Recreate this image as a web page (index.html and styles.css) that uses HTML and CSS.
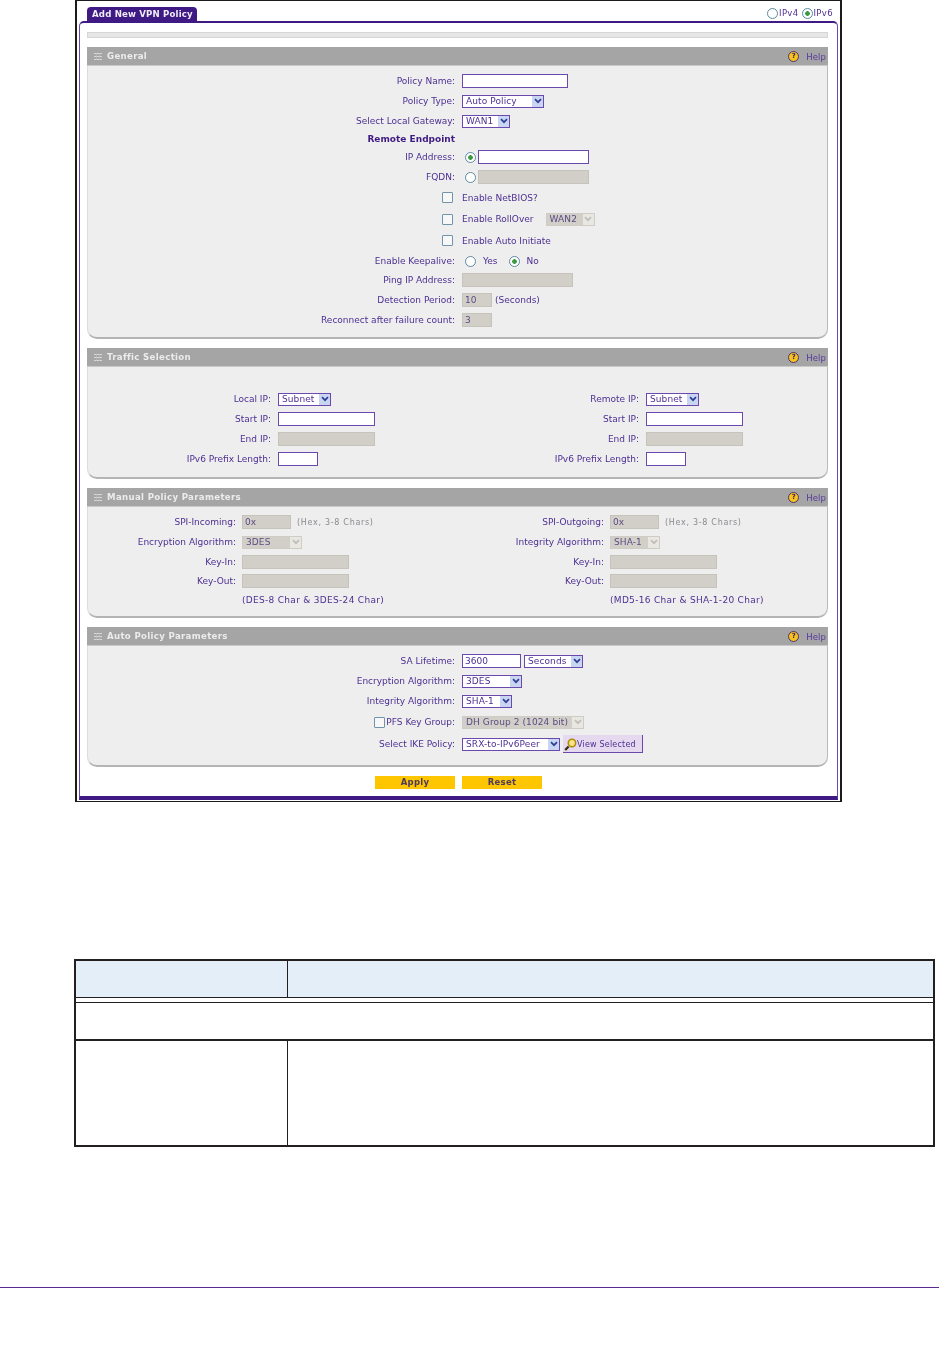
FILE: index.html
```html
<!DOCTYPE html>
<html lang="en">
<head>
<meta charset="utf-8">
<title>Add New VPN Policy</title>
<link rel="stylesheet" href="styles.css">
</head>
<body>
<svg class="defs" width="0" height="0" aria-hidden="true">
  <symbol id="grip" viewBox="0 0 8 7"><path d="M0 .5h8M0 3.5h8M0 6.5h8" stroke="#d8d8d8" fill="none"/><path d="M2.5 0v7M5.5 0v7" stroke="#bdbdbd" stroke-width=".6" fill="none"/></symbol>
  <symbol id="chev" viewBox="0 0 8 6"><path d="M1 1.2l3 3 3-3" stroke="currentColor" stroke-width="1.7" fill="none"/></symbol>
  <symbol id="lens" viewBox="0 0 13 13"><path d="M4.6 8.4L1.2 12" stroke="#3a2a10" stroke-width="2.2" fill="none"/><circle cx="8" cy="5" r="3.7" fill="#f6e58a" stroke="#b08a00" stroke-width="1.6"/></symbol>
</svg>

<div class="panel">
  <div class="tabbar">
    <div class="tab">Add New VPN Policy</div>
    <div class="ipver">
      <input class="radio" type="radio" name="ver"><span>IPv4</span>
      <input class="radio" type="radio" name="ver" checked><span>IPv6</span>
    </div>
  </div>
  <div class="frame">
    <div class="meter"></div>

    <section class="section">
      <div class="head"><svg class="grip"><use href="#grip"/></svg><span class="title">General</span><span class="help"><i class="q">?</i>Help</span></div>
      <div class="body b-general">
        <div class="row r20"><label class="lab">Policy Name:</label><input class="inp w106" type="text"></div>
        <div class="row r20"><label class="lab">Policy Type:</label><span class="sel w82"><span class="val">Auto Policy</span><span class="arr"><svg><use href="#chev"/></svg></span></span></div>
        <div class="row r20"><label class="lab">Select Local Gateway:</label><span class="sel w48"><span class="val">WAN1</span><span class="arr"><svg><use href="#chev"/></svg></span></span></div>
        <div class="row r16"><label class="lab strong">Remote Endpoint</label></div>
        <div class="row r20"><label class="lab">IP Address:</label><input class="radio rd-in" type="radio" name="re" checked><input class="inp w111" type="text"></div>
        <div class="row r20"><label class="lab">FQDN:</label><input class="radio rd-in" type="radio" name="re"><input class="inp w111 off" type="text" disabled></div>
        <div class="row r21"><span class="lab lab-chk"><input class="check" type="checkbox"></span><span class="txt">Enable NetBIOS?</span></div>
        <div class="row r22"><span class="lab lab-chk"><input class="check" type="checkbox"></span><span class="txt">Enable RollOver</span><span class="sel w49 dis roll"><span class="val">WAN2</span><span class="arr"><svg><use href="#chev"/></svg></span></span></div>
        <div class="row r21"><span class="lab lab-chk"><input class="check" type="checkbox"></span><span class="txt">Enable Auto Initiate</span></div>
        <div class="row r20"><label class="lab">Enable Keepalive:</label><input class="radio rd-in" type="radio" name="ka"><span class="txt yes">Yes</span><input class="radio rd-no" type="radio" name="ka" checked><span class="txt no">No</span></div>
        <div class="row r18"><label class="lab">Ping IP Address:</label><input class="inp w111 off" type="text" disabled></div>
        <div class="row r21"><label class="lab">Detection Period:</label><input class="inp w30 off" type="text" value="10" disabled><span class="txt sec">(Seconds)</span></div>
        <div class="row r20"><label class="lab">Reconnect after failure count:</label><input class="inp w30 off" type="text" value="3" disabled></div>
      </div>
    </section>

    <section class="section">
      <div class="head"><svg class="grip"><use href="#grip"/></svg><span class="title">Traffic Selection</span><span class="help"><i class="q">?</i>Help</span></div>
      <div class="body b-traffic pair">
        <div class="col c184">
          <div class="row r20"><label class="lab">Local IP:</label><span class="sel w53"><span class="val">Subnet</span><span class="arr"><svg><use href="#chev"/></svg></span></span></div>
          <div class="row r20"><label class="lab">Start IP:</label><input class="inp w97" type="text"></div>
          <div class="row r20"><label class="lab">End IP:</label><input class="inp w97 off" type="text" disabled></div>
          <div class="row r20"><label class="lab">IPv6 Prefix Length:</label><input class="inp w40" type="text"></div>
        </div>
        <div class="col c184">
          <div class="row r20"><label class="lab">Remote IP:</label><span class="sel w53"><span class="val">Subnet</span><span class="arr"><svg><use href="#chev"/></svg></span></span></div>
          <div class="row r20"><label class="lab">Start IP:</label><input class="inp w97" type="text"></div>
          <div class="row r20"><label class="lab">End IP:</label><input class="inp w97 off" type="text" disabled></div>
          <div class="row r20"><label class="lab">IPv6 Prefix Length:</label><input class="inp w40" type="text"></div>
        </div>
      </div>
    </section>

    <section class="section">
      <div class="head"><svg class="grip"><use href="#grip"/></svg><span class="title">Manual Policy Parameters</span><span class="help"><i class="q">?</i>Help</span></div>
      <div class="body b-manual pair">
        <div class="col c149">
          <div class="row r20"><label class="lab">SPI-Incoming:</label><input class="inp w49 off" type="text" value="0x" disabled><span class="hint">(Hex, 3-8 Chars)</span></div>
          <div class="row r20"><label class="lab">Encryption Algorithm:</label><span class="sel w60 dis"><span class="val">3DES</span><span class="arr"><svg><use href="#chev"/></svg></span></span></div>
          <div class="row r19"><label class="lab">Key-In:</label><input class="inp w107 off" type="text" disabled></div>
          <div class="row r20"><label class="lab">Key-Out:</label><input class="inp w107 off" type="text" disabled></div>
          <div class="row r18"><span class="lab"></span><span class="note">(DES-8 Char &amp; 3DES-24 Char)</span></div>
        </div>
        <div class="col c149">
          <div class="row r20"><label class="lab">SPI-Outgoing:</label><input class="inp w49 off" type="text" value="0x" disabled><span class="hint">(Hex, 3-8 Chars)</span></div>
          <div class="row r20"><label class="lab">Integrity Algorithm:</label><span class="sel w50 dis"><span class="val">SHA-1</span><span class="arr"><svg><use href="#chev"/></svg></span></span></div>
          <div class="row r19"><label class="lab">Key-In:</label><input class="inp w107 off" type="text" disabled></div>
          <div class="row r20"><label class="lab">Key-Out:</label><input class="inp w107 off" type="text" disabled></div>
          <div class="row r18"><span class="lab"></span><span class="note">(MD5-16 Char &amp; SHA-1-20 Char)</span></div>
        </div>
      </div>
    </section>

    <section class="section">
      <div class="head"><svg class="grip"><use href="#grip"/></svg><span class="title">Auto Policy Parameters</span><span class="help"><i class="q">?</i>Help</span></div>
      <div class="body b-auto">
        <div class="row r20"><label class="lab">SA Lifetime:</label><input class="inp w59" type="text" value="3600"><span class="sel w59 after"><span class="val">Seconds</span><span class="arr"><svg><use href="#chev"/></svg></span></span></div>
        <div class="row r20"><label class="lab">Encryption Algorithm:</label><span class="sel w60"><span class="val">3DES</span><span class="arr"><svg><use href="#chev"/></svg></span></span></div>
        <div class="row r20"><label class="lab">Integrity Algorithm:</label><span class="sel w50"><span class="val">SHA-1</span><span class="arr"><svg><use href="#chev"/></svg></span></span></div>
        <div class="row r22"><span class="lab lab-pfs"><input class="check" type="checkbox"><span>PFS Key Group:</span></span><span class="sel w122 dis"><span class="val">DH Group 2 (1024 bit)</span><span class="arr"><svg><use href="#chev"/></svg></span></span></div>
        <div class="row r22"><label class="lab">Select IKE Policy:</label><span class="sel w98"><span class="val">SRX-to-IPv6Peer</span><span class="arr"><svg><use href="#chev"/></svg></span></span><button class="view" type="button"><svg><use href="#lens"/></svg>View Selected</button></div>
      </div>
    </section>

    <div class="actions">
      <button class="act" type="button">Apply</button>
      <button class="act" type="button">Reset</button>
    </div>
  </div>
</div>

<table class="doc">
  <thead>
    <tr class="doc-head"><th class="doc-a"></th><th></th></tr>
  </thead>
  <tbody>
    <tr class="doc-gap"><td colspan="2"></td></tr>
    <tr class="doc-group"><td colspan="2"></td></tr>
    <tr class="doc-row"><td class="doc-a"></td><td></td></tr>
  </tbody>
</table>

<div class="foot"></div>
</body>
</html>
```
FILE: styles.css
```css
* { box-sizing: border-box; }
html, body { margin: 0; padding: 0; background: #fff; }
body {
  height: 1356px;
  overflow: hidden;
  font-family: "DejaVu Sans", Verdana, sans-serif;
  font-size: 9px;
  color: #4d2f92;
}
.defs { position: absolute; }

/* screenshot panel */
.panel {
  width: 767px;
  margin-left: 75px;
  border: 2px solid #1c1a1c;
  border-top-width: 1px;
  border-bottom-width: 1px;
  padding: 0 2px 1px;
  background: #fff;
  filter: blur(.3px);
}
.tabbar {
  height: 20px;
  display: flex;
  justify-content: space-between;
  align-items: flex-end;
  padding: 0 5px 0 8px;
}
.tab {
  width: 110px;
  height: 14px;
  background: #3f1a84;
  color: #f1edf7;
  font-weight: 700;
  font-size: 8.6px;
  letter-spacing: .17px;
  line-height: 15px;
  padding-left: 5px;
  border-radius: 4px 4px 0 0;
}
.ipver {
  display: flex;
  align-items: center;
  height: 20px;
  padding-top: 4px;
  gap: 1px;
  font-size: 8.5px;
  letter-spacing: .35px;
}
.ipver span { margin-right: 2px; }
.ipver span:last-child { margin-right: 0; }

.frame {
  width: 759px;
  border: 1px solid #6a48ad;
  border-top: 2px solid #3f1a84;
  border-bottom: 4px solid #3f1a84;
  border-radius: 5px 5px 0 0;
  padding: 9px 9px 7px 7px;
}
.meter {
  height: 6px;
  background: #e6e6e6;
  border: 1px solid #d6d6d6;
  margin-bottom: 9px;
}

/* sections */
.section { margin-bottom: 9px; }
.head {
  height: 19px;
  background: #a5a5a5;
  border-bottom: 1px solid #c9c9c9;
  display: flex;
  align-items: center;
  padding: 0 2px 0 7px;
}
.grip { width: 8px; height: 7px; margin-right: 5px; }
.title {
  color: #ececec;
  font-weight: 700;
  font-size: 8.6px;
  letter-spacing: .33px;
}
.help {
  margin-left: auto;
  padding-top: 1px;
  display: flex;
  align-items: center;
  color: #57399f;
  font-size: 8.5px;
  letter-spacing: .1px;
}
.q {
  width: 11px;
  height: 11px;
  border-radius: 50%;
  background: #f6c21c;
  border: 1.5px solid #54306f;
  color: #42236a;
  font-style: normal;
  font-weight: 700;
  font-size: 7px;
  line-height: 8px;
  text-align: center;
  margin-right: 7px;
}
.body {
  background: #eee;
  border-right: 1px solid #b9b9b9;
  border-bottom: 2px solid #b4b4b4;
  border-left: 1px solid #dcdcdc;
  border-radius: 0 0 10px 10px;
}
.b-general { padding: 5px 0 7px; }
.b-traffic { padding: 22px 0 8px; }
.b-manual { padding: 5px 0 7px; }
.b-auto { padding: 5px 0 10px; }
.pair { display: grid; grid-template-columns: 368px 1fr; }

/* rows */
.row { display: flex; align-items: center; }
.r16 { height: 16px; }
.r18 { height: 18px; }
.r19 { height: 19px; }
.r20 { height: 20px; }
.r21 { height: 21px; }
.r22 { height: 22px; }
.lab {
  flex: none;
  width: 367px;
  margin-right: 7px;
  text-align: right;
}
.c184 .lab { width: 183px; }
.c149 .lab { width: 148px; margin-right: 6px; }
.strong { font-weight: 700; color: #3f1a84; }
.lab-chk { display: flex; justify-content: flex-end; padding-right: 2px; }
.lab-pfs { display: flex; justify-content: flex-end; align-items: center; gap: 1px; }

/* controls */
.inp {
  height: 14px;
  border: 1.5px solid #6a48ad;
  background: #fff;
  padding: 0 2px;
  font: inherit;
  color: #4d2f92;
  border-radius: 0;
  outline: 0;
}
.inp.off {
  background: #d2cec8;
  border: 1px solid #c6c3bd;
  color: #5b4b84;
}
.w30 { width: 30px; }
.w40 { width: 40px; }
.w48 { width: 48px; }
.w49 { width: 49px; }
.w50 { width: 50px; }
.w53 { width: 53px; }
.w59 { width: 59px; }
.w60 { width: 60px; }
.w82 { width: 82px; }
.w97 { width: 97px; }
.w98 { width: 98px; }
.w106 { width: 106px; }
.w107 { width: 107px; }
.w111 { width: 111px; }
.w122 { width: 122px; }
.sel {
  flex: none;
  height: 13px;
  display: flex;
  align-items: center;
  border: 1.5px solid #6a48ad;
  background: #fff;
  color: #4d2f92;
  letter-spacing: .1px;
}
.val { flex: 1; padding-left: 3px; white-space: nowrap; overflow: hidden; }
.arr {
  flex: none;
  width: 11px;
  height: 100%;
  background: #c9d6f3;
  color: #2e3f95;
  display: flex;
  align-items: center;
  justify-content: center;
}
.arr svg { width: 8px; height: 6px; }
.sel.dis { border: 1px solid #cfccc6; background: #d2cec8; color: #5b4b84; }
.sel.dis .arr { background: #e9e7e2; color: #bfbdb8; }
.after { margin-left: 3px; }
.roll { margin-left: 12px; }
.radio {
  appearance: none;
  flex: none;
  width: 11px;
  height: 11px;
  margin: 0;
  border-radius: 50%;
  border: 1px solid #5e8aa0;
  background: #fff;
}
.radio:checked { background: radial-gradient(circle, #3a9a3e 0 2px, #fff 2.6px); }
.rd-in { margin: 0 2px 0 3px; }
.rd-no { margin-left: 11px; }
.yes { margin-left: 5px; }
.no { margin-left: 7px; }
.sec { margin-left: 3px; }
.check {
  appearance: none;
  flex: none;
  width: 11px;
  height: 11px;
  margin: 0;
  border: 1px solid #6f94ab;
  background: #f7f7f7;
  border-radius: 1px;
}
.hint { margin-left: 6px; color: #8a8a8f; font-size: 8px; letter-spacing: .7px; }
.note { letter-spacing: .3px; }
.view {
  flex: none;
  width: 80px;
  height: 18px;
  margin-left: 3px;
  display: flex;
  align-items: center;
  padding: 2px 0 0 1px;
  background: #e4d9ee;
  border: 0;
  border-right: 1px solid #6a48ad;
  border-bottom: 1px solid #6a48ad;
  color: #4d2f92;
  font: inherit;
  font-size: 8px;
  letter-spacing: .2px;
}
.view svg { width: 13px; height: 13px; flex: none; }

.actions {
  display: flex;
  justify-content: center;
  gap: 7px;
  padding-left: 2px;
}
.act {
  width: 80px;
  height: 13px;
  padding: 0;
  border: 0;
  background: #fdc600;
  color: #4d3a5e;
  font: inherit;
  font-size: 8.5px;
  font-weight: 700;
  letter-spacing: .3px;
  line-height: 13px;
}

/* document table */
.doc {
  width: 861px;
  margin: 157px 0 0 74px;
  border-collapse: separate;
  border-spacing: 0;
  border: 2px solid #231f20;
}
.doc th, .doc td { padding: 0; }
.doc-a { width: 212px; border-right: 1px solid #231f20; }
.doc-head th { height: 37px; background: #e3eef8; border-bottom: 1px solid #231f20; }
.doc-gap td { height: 5px; border-bottom: 1px solid #231f20; }
.doc-group td { height: 38px; border-bottom: 2px solid #231f20; }
.doc-row td { height: 104px; }

.foot {
  height: 1px;
  margin-top: 140px;
  background: #5b2a90;
}
```
